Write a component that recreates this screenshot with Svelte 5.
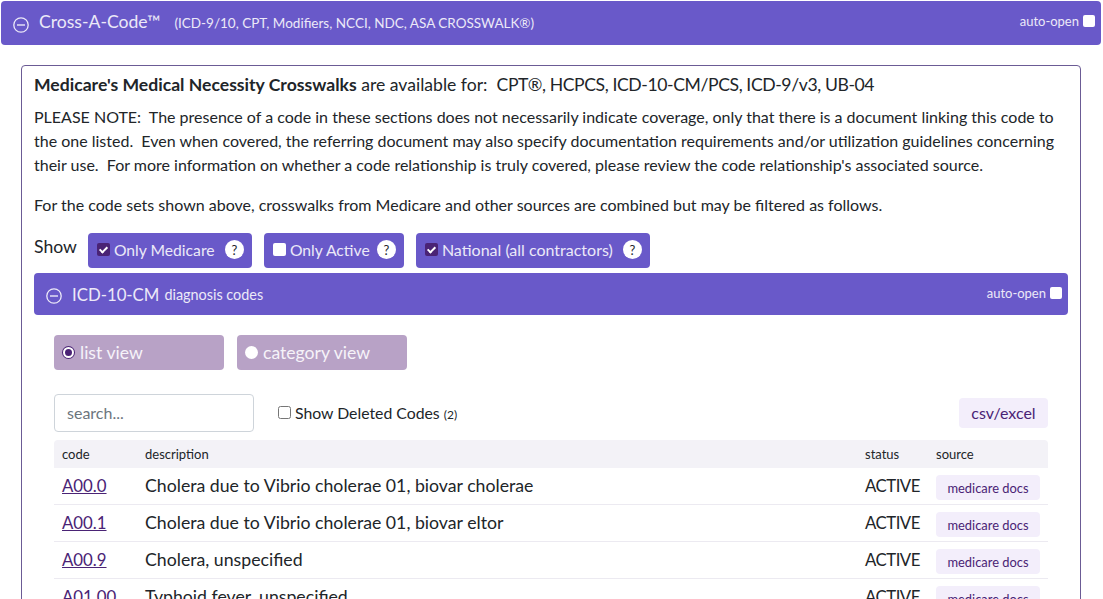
<script lang="ts">
	const rows = [
		{ code: 'A00.0', description: 'Cholera due to Vibrio cholerae 01, biovar cholerae' },
		{ code: 'A00.1', description: 'Cholera due to Vibrio cholerae 01, biovar eltor' },
		{ code: 'A00.9', description: 'Cholera, unspecified' },
		{ code: 'A01.00', description: 'Typhoid fever, unspecified' }
	];

	const filters = [
		{ label: 'Only Medicare', checked: true },
		{ label: 'Only Active', checked: false },
		{ label: 'National (all contractors)', checked: true }
	];

	let view = $state('list');
</script>

{#snippet minus(size: number)}
	<svg class="minus" width={size} height={size} viewBox="0 0 16 16" fill="none" stroke="currentColor">
		<circle cx="8" cy="8" r="7.2" stroke-width="1.3" />
		<path d="M4 8h8" stroke-width="1.4" />
	</svg>
{/snippet}

{#snippet autoOpen()}
	<label class="auto-open">auto-open <input type="checkbox" class="box" /></label>
{/snippet}

<div class="page">
	<header class="bar top-bar">
		<div class="bar-title">
			{@render minus(16)}
			<span class="bar-name">Cross-A-Code™</span>
			<span class="bar-sub">(ICD-9/10, CPT, Modifiers, NCCI, NDC, ASA CROSSWALK®)</span>
		</div>
		{@render autoOpen()}
	</header>

	<section class="panel">
		<p class="lead"><b>Medicare's Medical Necessity Crosswalks</b> are available for:&nbsp; <span class="sets">CPT®, HCPCS, ICD-10-CM/PCS, ICD-9/v3, UB-04</span></p>
		<p class="note">PLEASE NOTE:&nbsp; The presence of a code in these sections does not necessarily indicate coverage, only that there is a document linking this code to the one listed.&nbsp; Even when covered, the referring document may also specify documentation requirements and/or utilization guidelines concerning their use.&nbsp; For more information on whether a code relationship is truly covered, please review the code relationship's associated source.</p>
		<p class="note combined">For the code sets shown above, crosswalks from Medicare and other sources are combined but may be filtered as follows.</p>

		<div class="show-row">
			<span class="show-label">Show</span>
			{#each filters as filter}
				<label class="filter">
					<input type="checkbox" class="box" checked={filter.checked} />
					<span>{filter.label}</span>
					<span class="help">?</span>
				</label>
			{/each}
		</div>

		<div class="bar sub-bar">
			<div class="bar-title">
				{@render minus(16)}
				<span class="sub-name">ICD-10-CM</span>
				<span class="sub-desc">diagnosis codes</span>
			</div>
			{@render autoOpen()}
		</div>

		<div class="codes">
			<div class="views">
				<label class="view">
					<input type="radio" name="view" value="list" bind:group={view} />
					<span>list view</span>
				</label>
				<label class="view">
					<input type="radio" name="view" value="category" bind:group={view} />
					<span>category view</span>
				</label>
			</div>

			<div class="tools">
				<input class="search" type="text" placeholder="search..." />
				<label class="deleted">
					<input type="checkbox" />
					<span>Show Deleted Codes <small>(2)</small></span>
				</label>
				<button class="csv">csv/excel</button>
			</div>

			<table>
				<thead>
					<tr>
						<th class="col-code">code</th>
						<th>description</th>
						<th class="col-status">status</th>
						<th class="col-source">source</th>
					</tr>
				</thead>
				<tbody>
					{#each rows as row}
						<tr>
							<td class="code-cell"><a href="#{row.code}">{row.code}</a></td>
							<td>{row.description}</td>
							<td class="status-cell">ACTIVE</td>
							<td><span class="docs">medicare docs</span></td>
						</tr>
					{/each}
				</tbody>
			</table>
		</div>
	</section>
</div>

<style>
	:global(body) {
		margin: 0;
		background: #fff;
		overflow: hidden;
	}

	.page {
		height: 599px;
		overflow: hidden;
		padding: 1px 2px 0 1px;
		box-sizing: border-box;
		font-family: 'Lato', 'Noto Sans', sans-serif;
		color: #212529;
		font-size: 16px;
	}

	.bar {
		display: flex;
		align-items: center;
		justify-content: space-between;
		background: #6959c9;
		color: #fff;
		border-radius: 4px;
		box-sizing: border-box;
	}

	.top-bar {
		height: 44px;
		padding: 0 6px 0 12px;
	}

	.bar-title {
		display: flex;
		align-items: center;
		color: #ece9f8;
	}

	.minus {
		flex: none;
		margin-top: 3px;
	}

	.bar-name {
		font-size: 17.6px;
		margin-left: 10px;
		margin-top: -3px;
	}

	.bar-sub {
		font-size: 13.5px;
		margin-left: 14px;
	}

	.auto-open {
		display: flex;
		align-items: center;
		gap: 4px;
		font-size: 13px;
		margin-top: -4px;
		color: #ece9f8;
	}

	.sub-bar .auto-open {
		margin-top: -2px;
	}

	.box {
		appearance: none;
		width: 12px;
		height: 12px;
		margin: 0;
		border-radius: 2px;
		background: #fff;
		position: relative;
		flex: none;
	}

	.filter .box {
		width: 13px;
		height: 13px;
	}

	.box:checked {
		background: #4a2375;
	}

	.box:checked::after {
		content: '';
		position: absolute;
		left: 4px;
		top: 1.5px;
		width: 3px;
		height: 6px;
		border: solid #fff;
		border-width: 0 2px 2px 0;
		transform: rotate(45deg);
	}

	.panel {
		margin: 20px 20px 0;
		padding: 6px 12px 0;
		border: 1px solid #6b5b95;
		border-radius: 4px;
		height: 600px;
		box-sizing: border-box;
	}

	p {
		margin: 0;
	}

	.lead {
		font-size: 17.6px;
		line-height: 26px;
	}

	.lead b {
		font-weight: 700;
	}

	.sets {
		letter-spacing: -0.4px;
	}

	.note {
		margin-top: 7px;
		font-size: 16px;
		line-height: 24px;
	}

	.combined {
		margin-top: 16px;
	}

	.show-row {
		display: flex;
		align-items: flex-start;
		margin-top: 16px;
	}

	.show-label {
		font-size: 17.6px;
		line-height: 28px;
		margin-right: 11px;
	}

	.filter {
		display: flex;
		align-items: center;
		height: 35px;
		padding: 0 8px 2px 9px;
		margin-right: 12px;
		gap: 4px;
		background: #6959c9;
		color: #ece9f8;
		border-radius: 4px;
		font-size: 15.7px;
		box-sizing: border-box;
	}

	.filter:nth-of-type(1) {
		width: 164px;
	}

	.filter:nth-of-type(2) {
		width: 140px;
	}

	.filter:nth-of-type(3) {
		width: 234px;
		font-size: 16px;
	}

	.help {
		display: inline-flex;
		align-items: center;
		justify-content: center;
		width: 19px;
		height: 19px;
		margin-left: auto;
		border-radius: 50%;
		background: #fff;
		color: #212529;
		font-size: 13px;
	}

	.sub-bar {
		height: 42px;
		margin-top: 5px;
		padding: 0 6px 0 12px;
	}

	.sub-name {
		font-size: 16.8px;
		margin-left: 10px;
	}

	.sub-desc {
		font-size: 14.4px;
		margin-left: 5px;
	}

	.codes {
		padding: 20px 20px 0;
	}

	.views {
		display: flex;
		gap: 13px;
	}

	.view {
		display: flex;
		align-items: center;
		width: 170px;
		height: 35px;
		padding-left: 8px;
		box-sizing: border-box;
		gap: 5px;
		background: #b8a2c6;
		color: #f6f3f9;
		border-radius: 4px;
		font-size: 17.6px;
	}

	.view input {
		appearance: none;
		width: 13px;
		height: 13px;
		margin: 0;
		border-radius: 50%;
		background: #fff;
		flex: none;
	}

	.view input:checked {
		background: #4a2375;
		border: 2px solid #fff;
		box-shadow: 0 0 0 1px #4a2375;
		width: 11px;
		height: 11px;
		margin: 1px;
	}

	.tools {
		display: flex;
		align-items: center;
		margin-top: 24px;
	}

	.search {
		width: 200px;
		height: 38px;
		padding: 0 12px 2px;
		box-sizing: border-box;
		border: 1px solid #ced4da;
		border-radius: 4px;
		font: inherit;
		font-size: 16px;
		outline: none;
	}

	.search::placeholder {
		color: #6c757d;
	}

	.deleted {
		display: flex;
		align-items: center;
		gap: 4px;
		margin-left: 24px;
		padding-bottom: 2px;
		font-size: 15.8px;
	}

	.deleted input {
		width: 13px;
		height: 13px;
		margin: 0;
	}

	.deleted small {
		font-size: 12px;
	}

	.csv {
		margin-left: auto;
		height: 30px;
		width: 89px;
		border: 0;
		padding: 0 0 2px;
		border-radius: 4px;
		background: #f3eefb;
		color: #4a2375;
		font: inherit;
		font-size: 16px;
	}

	table {
		width: 100%;
		margin-top: 8px;
		border-collapse: separate;
		border-spacing: 0;
		table-layout: fixed;
	}

	th {
		height: 28px;
		padding: 0 8px;
		background: #f3f2f7;
		font-size: 13px;
		font-weight: 400;
		text-align: left;
	}

	th:first-child {
		border-radius: 4px 0 0 0;
	}

	th:last-child {
		border-radius: 0 4px 0 0;
	}

	.col-code {
		width: 67px;
	}

	.col-status {
		width: 55px;
	}

	.col-source {
		width: 104px;
	}

	td {
		height: 37px;
		padding: 0 8px 1px;
		box-sizing: border-box;
		border-bottom: 1px solid #eceaf1;
		font-size: 17.7px;
	}

	td a {
		color: #4a2375;
	}

	.code-cell {
		font-size: 16.8px;
	}

	.status-cell {
		font-size: 16.8px;
		letter-spacing: -0.5px;
	}

	.docs {
		display: inline-block;
		width: 104px;
		height: 25px;
		line-height: 26px;
		margin-top: 3px;
		text-align: center;
		background: #f3eefb;
		color: #4a2375;
		border-radius: 4px;
		font-size: 12.9px;
	}
</style>
